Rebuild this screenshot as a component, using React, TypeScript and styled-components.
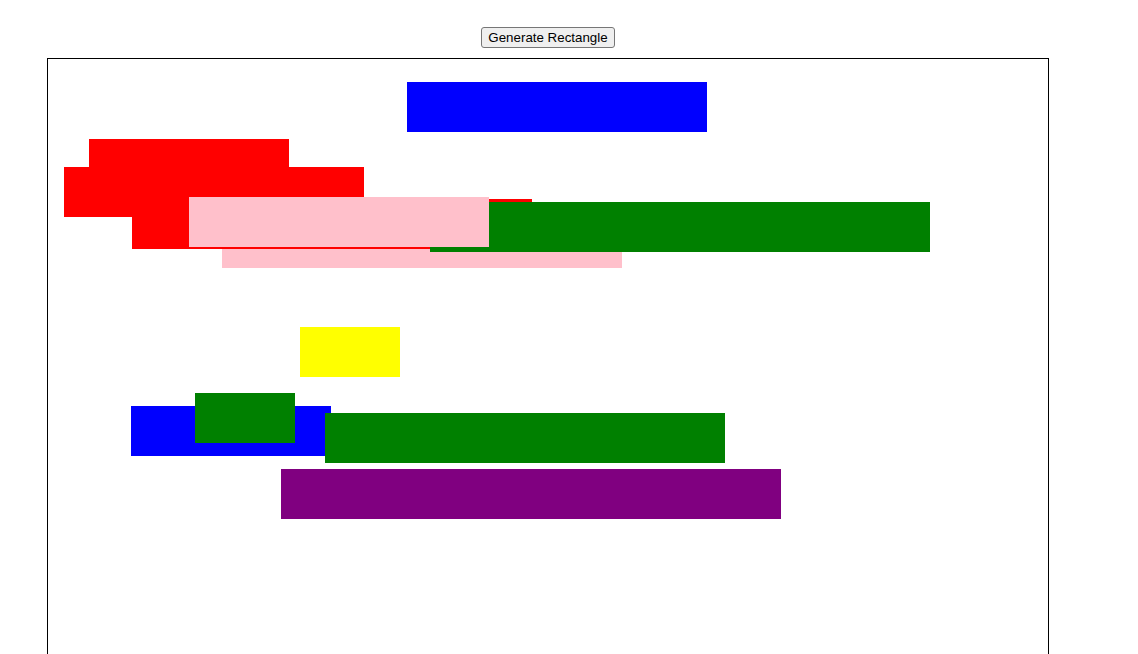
import React from 'react'
import styled, { createGlobalStyle } from 'styled-components'

const GlobalStyle = createGlobalStyle`
  html, body {
    margin: 0;
    padding: 0;
    background: #fff;
    overflow: hidden;
  }
`

const Page = styled.div`
  width: 1096px;
  display: flex;
  flex-direction: column;
  align-items: center;
  padding-top: 27px;
`

const GenerateButton = styled.button`
  height: 21px;
  padding: 1px 6px;
  font-family: 'Liberation Sans', Arial, sans-serif;
  font-size: 13.333px;
  color: #000;
  background: #efefef;
  border: 1px solid #767676;
  border-radius: 3px;
  cursor: pointer;
`

const Canvas = styled.div`
  position: relative;
  margin-top: 10px;
  width: 1000px;
  height: 600px;
  border: 1px solid #000;
  overflow: hidden;
`

const Rect = styled.div<{ $x: number; $y: number; $w: number; $color: string }>`
  position: absolute;
  left: ${p => p.$x}px;
  top: ${p => p.$y}px;
  width: ${p => p.$w}px;
  height: 50px;
  background: ${p => p.$color};
`

interface IRect {
  x: number
  y: number
  w: number
  color: string
}

// 绘制顺序即叠放顺序
const rects: IRect[] = [
  { x: 359, y: 23, w: 300, color: 'blue' },
  { x: 41, y: 80, w: 200, color: 'red' },
  { x: 16, y: 108, w: 300, color: 'red' },
  { x: 174, y: 159, w: 400, color: 'pink' },
  { x: 84, y: 140, w: 400, color: 'red' },
  { x: 382, y: 143, w: 500, color: 'green' },
  { x: 141, y: 138, w: 300, color: 'pink' },
  { x: 252, y: 268, w: 100, color: 'yellow' },
  { x: 83, y: 347, w: 200, color: 'blue' },
  { x: 147, y: 334, w: 100, color: 'green' },
  { x: 277, y: 354, w: 400, color: 'green' },
  { x: 233, y: 410, w: 500, color: 'purple' },
]

export default () => (
  <>
    <GlobalStyle />
    <Page>
      <GenerateButton>Generate Rectangle</GenerateButton>
      <Canvas>
        {rects.map((r, i) => (
          <Rect key={i} $x={r.x} $y={r.y} $w={r.w} $color={r.color} />
        ))}
      </Canvas>
    </Page>
  </>
)
